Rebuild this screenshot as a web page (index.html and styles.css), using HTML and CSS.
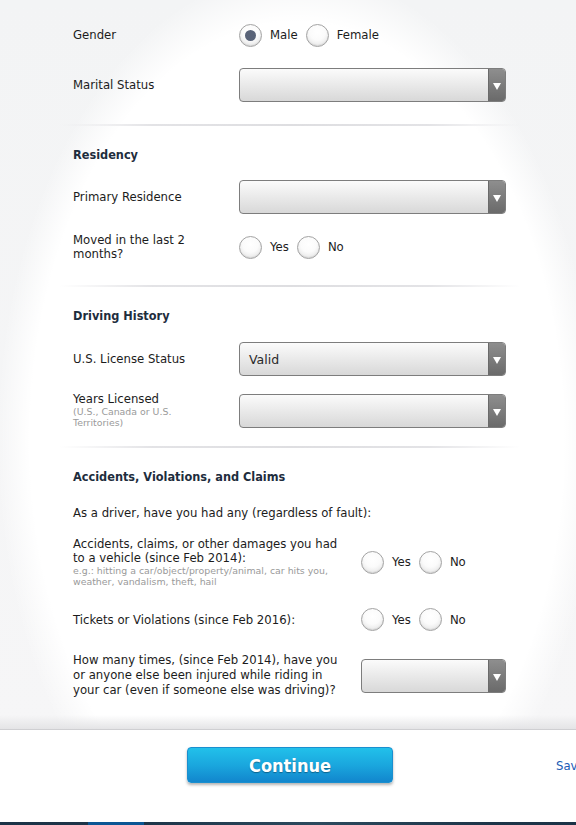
FILE: index.html
```html
<!DOCTYPE html>
<html lang="en">
<head>
<meta charset="utf-8">
<title>Driver details</title>
<link rel="stylesheet" href="styles.css">
</head>
<body>
<div class="page">
  <main class="main">
    <form class="form">
      <div class="row row-gender">
        <div class="label">Gender</div>
        <div class="control radios">
          <span class="radio checked"></span><span class="opt">Male</span>
          <span class="radio"></span><span class="opt">Female</span>
        </div>
      </div>
      <div class="row row-select r-marital">
        <div class="label">Marital Status</div>
        <div class="control"><div class="select"><span class="val"></span><span class="arrow"></span></div></div>
      </div>
      <div class="divider"></div>

      <h2 class="heading">Residency</h2>
      <div class="row row-select r-primary">
        <div class="label">Primary Residence</div>
        <div class="control"><div class="select"><span class="val"></span><span class="arrow"></span></div></div>
      </div>
      <div class="row r-moved">
        <div class="label">Moved in the last 2<br>months?</div>
        <div class="control radios">
          <span class="radio"></span><span class="opt">Yes</span>
          <span class="radio"></span><span class="opt">No</span>
        </div>
      </div>
      <div class="divider d2"></div>

      <h2 class="heading">Driving History</h2>
      <div class="row row-select r-license">
        <div class="label">U.S. License Status</div>
        <div class="control"><div class="select"><span class="val">Valid</span><span class="arrow"></span></div></div>
      </div>
      <div class="row row-top r-years">
        <div class="label">Years Licensed<div class="sub">(U.S., Canada or U.S.<br>Territories)</div></div>
        <div class="control"><div class="select"><span class="val"></span><span class="arrow"></span></div></div>
      </div>
      <div class="divider d3"></div>

      <h2 class="heading">Accidents, Violations, and Claims</h2>
      <p class="intro">As a driver, have you had any (regardless of fault):</p>
      <div class="row wide r-acc">
        <div class="label">Accidents, claims, or other damages you had<br>to a vehicle (since Feb 2014):<div class="sub">e.g.: hitting a car/object/property/animal, car hits you,<br>weather, vandalism, theft, hail</div></div>
        <div class="control radios">
          <span class="radio"></span><span class="opt">Yes</span>
          <span class="radio"></span><span class="opt">No</span>
        </div>
      </div>
      <div class="row wide r-tickets">
        <div class="label">Tickets or Violations (since Feb 2016):</div>
        <div class="control radios">
          <span class="radio"></span><span class="opt">Yes</span>
          <span class="radio"></span><span class="opt">No</span>
        </div>
      </div>
      <div class="row wide row-select r-injured">
        <div class="label lh15">How many times, (since Feb 2014), have you<br>or anyone else been injured while riding in<br>your car (even if someone else was driving)?</div>
        <div class="control"><div class="select"><span class="val"></span><span class="arrow"></span></div></div>
      </div>
    </form>
  </main>
  <footer class="footer">
    <div class="footer-inner">
      <button type="button" class="continue">Continue</button>
      <a class="save" href="#">Save</a>
    </div>
    <div class="bottombar"><span class="seg"></span></div>
  </footer>
</div>
</body>
</html>
```

FILE: styles.css
```css
* { box-sizing: border-box; }
html, body { margin: 0; padding: 0; }
body {
  width: 576px;
  height: 825px;
  overflow: hidden;
  font-family: "DejaVu Sans", Verdana, sans-serif;
  font-size: 11.7px;
  color: #1c1c1c;
  background: #f6f6f7;
}
.page {
  display: flex;
  flex-direction: column;
  height: 825px;
}
.main {
  flex: 1;
  position: relative;
  background:
    radial-gradient(ellipse 300px 470px at 297px 440px, #ffffff 0%, #ffffff 89%, rgba(255,255,255,0) 100%),
    linear-gradient(#f3f4f5, #f6f6f7);
  padding: 24px 0 0 73px;
  overflow: hidden;
}
.main::after {
  content: "";
  position: absolute;
  left: 0; right: 0; bottom: 0;
  height: 14px;
  background: linear-gradient(rgba(225,225,228,0), #e4e4e6);
}
.form { width: 433px; }
.row {
  display: flex;
  align-items: center;
}
.row .label {
  width: 166px;
  flex: none;
  line-height: 14px;
}
.row.wide .label { width: 288px; }
.row .control { flex: 1; }
.row-top { align-items: flex-start; }
.lh15 { line-height: 15px !important; }

.radios {
  display: flex;
  align-items: center;
}
.radio {
  width: 23px;
  height: 23px;
  border-radius: 50%;
  border: 1px solid #a3a3a3;
  background: radial-gradient(circle at 50% 35%, #ffffff 0%, #fbfbfb 45%, #dcdcdc 100%);
  box-shadow: inset 0 -1px 1px rgba(0,0,0,0.08);
  flex: none;
  position: relative;
}
.radio.checked::after {
  content: "";
  position: absolute;
  left: 5px; top: 5px;
  width: 11px; height: 11px;
  border-radius: 50%;
  background: #596378;
}
.opt { margin: 0 8px 0 8px; }

.select {
  height: 34px;
  border: 1px solid #7d7d7d;
  border-radius: 4px;
  background: linear-gradient(#fbfbfb, #e6e6e6 60%, #d8d8d8);
  display: flex;
  align-items: center;
  overflow: hidden;
}
.select .val {
  flex: 1;
  padding-left: 9px;
  font-size: 12.5px;
  color: #2a2a2a;
}
.select .arrow {
  width: 17px;
  height: 100%;
  background: linear-gradient(#8e8e8e, #6a6a6a);
  border-left: 1px solid #6a6a6a;
  position: relative;
  flex: none;
}
.select .arrow::after {
  content: "";
  position: absolute;
  left: 4px; top: 14px;
  border-left: 4.5px solid transparent;
  border-right: 4.5px solid transparent;
  border-top: 7px solid #ffffff;
}

.row-gender { height: 22px; }
.r-marital { margin-top: 22px; }
.divider {
  height: 2px;
  margin: 22px 0 0 -13px;
  width: 460px;
  background: linear-gradient(90deg, rgba(220,220,224,0), #e3e3e6 20%, #dedee1 50%, #e3e3e6 80%, rgba(220,220,224,0));
}
.heading {
  margin: 21px 0 0;
  font-family: "DejaVu Sans Condensed", "DejaVu Sans", sans-serif;
  font-size: 12.6px;
  font-weight: bold;
  color: #1e2d3d;
  line-height: 16px;
}
.r-primary { margin-top: 17px; }
.r-moved { margin-top: 19px; }
.d2 { margin-top: 24px; }
.r-license { margin-top: 18px; }
.r-years { margin-top: 16px; }
.r-years .control { margin-top: 2px; }
.sub {
  font-size: 9.4px;
  line-height: 11px;
  color: #9a9a9a;
}
.d3 { margin-top: 18px; }
.intro {
  margin: 21px 0 0;
  line-height: 14px;
}
.r-acc { margin-top: 17px; }
.r-tickets { margin-top: 21px; }
.r-injured { margin-top: 22px; }

.footer {
  flex: none;
  height: 96px;
  background: #ffffff;
  border-top: 1px solid #cfcfd2;
  display: flex;
  flex-direction: column;
}
.footer-inner {
  flex: 1;
  display: flex;
  align-items: flex-start;
  padding: 17px 0 0 187px;
  overflow: hidden;
}
.continue {
  flex: none;
  width: 206px;
  height: 36px;
  border: 1px solid #1a8fcf;
  border-radius: 4px;
  background: linear-gradient(#22c0ea, #1aa7de 50%, #1286cd);
  box-shadow: 0 2px 3px rgba(0,0,0,0.3);
  color: #ffffff;
  font-family: "DejaVu Sans Condensed", "DejaVu Sans", sans-serif;
  font-weight: bold;
  font-size: 18px;
  text-shadow: 0 1px 1px rgba(0,0,0,0.35);
  padding: 0;
  cursor: pointer;
}
.save {
  flex: none;
  margin-left: 163px;
  margin-top: 12px;
  color: #1a5bb5;
  text-decoration: none;
  font-size: 11.7px;
  white-space: nowrap;
}
.bottombar {
  height: 3px;
  background: linear-gradient(90deg, #1b3347 0%, #1d3549 25%, #2c4a5e 55%, #1d3549 85%, #1b3347 100%);
  position: relative;
}
.bottombar .seg {
  position: absolute;
  left: 88px;
  top: 0;
  width: 56px;
  height: 3px;
  background: #0b5694;
}
```
